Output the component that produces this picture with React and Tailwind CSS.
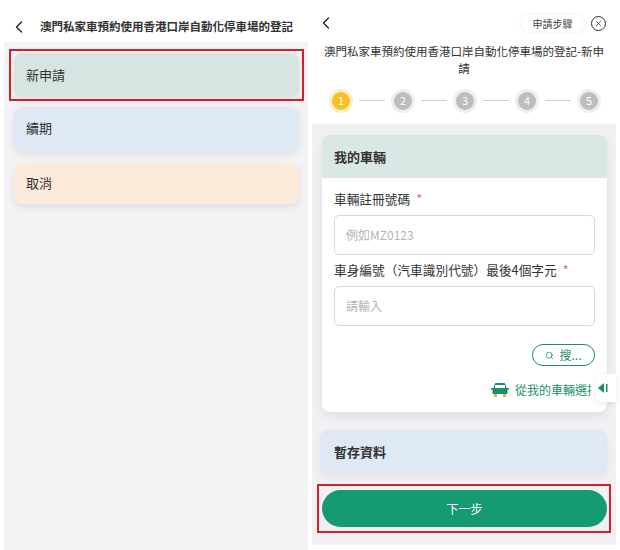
import React from "react";
import { ChevronLeft, X, Search } from "lucide-react";

const font = { fontFamily: '"Noto Sans CJK TC", "Noto Sans", sans-serif' };

const Step = ({ n, active }) => (
  <div
    className={`flex h-[24px] w-[24px] items-center justify-center rounded-full border-[3px] text-[11px] text-white ${
      active ? "border-[#fdf0c8] bg-[#fbbf24]" : "border-[#eeeeee] bg-[#bdbdbd]"
    }`}
  >
    {n}
  </div>
);

const Line = () => <div className="h-px w-[26px] bg-[#cfcfcf]" />;

const Car = () => (
  <svg width="18" height="16" viewBox="0 0 18 16" fill="#1a8f6f">
    <path d="M3.5 2.5C3.8 1.3 4.6 1 5.5 1h7c.9 0 1.7.3 2 1.5L15.5 6H17c.5 0 1 .4 1 .9 0 .4-.4.7-.8.8l-.7.1V12H1.500V7.800l-.7-.1C.4 7.600 0 7.300 0 6.900 0 6.400.5 6 1 6h1.500z" />
    <rect x="4" y="3" width="10" height="3" rx="0.5" fill="#ffffff" />
    <rect x="3" y="12" width="3" height="3" rx="0.5" fill="#d9b44a" />
    <rect x="12" y="12" width="3" height="3" rx="0.5" fill="#d9b44a" />
  </svg>
);

const Field = ({ label, placeholder }) => (
  <div>
    <div className="flex h-[24px] items-center text-[12.7px] text-[#333333]">
      {label}
      <span className="ml-[6px] text-[#e06666]">*</span>
    </div>
    <div className="mt-[4px] flex h-[40px] items-center rounded-[5px] border border-[#d9d9d9] bg-white px-[11px] text-[12px] text-[#b5b5b5]">
      {placeholder}
    </div>
  </div>
);

export default function App() {
  return (
    <div className="flex h-[550px] w-[620px] gap-[4px] overflow-hidden bg-white pl-[4px]" style={font}>
      {/* 左邊：選擇申請類型 */}
      <div className="flex w-[304px] flex-col">
        <div className="flex h-[42px] items-center pt-[11px]">
          <ChevronLeft size={20} strokeWidth={1.6} className="ml-[5px] text-[#222222]" />
          <span className="ml-[11px] whitespace-nowrap text-[11.5px] font-bold text-[#333333]">
            澳門私家車預約使用香港口岸自動化停車場的登記
          </span>
        </div>
        <div className="flex flex-1 flex-col bg-[#f3f3f5] pl-[10px] pr-[9px] pt-[11px]">
          <div className="relative flex h-[44px] items-center rounded-[8px] bg-[#d6e5e1] px-[12px] text-[13px] text-[#333333] shadow-[0_4px_8px_rgba(0,0,0,0.08)]">
            新申請
            <div className="absolute -inset-x-[5px] -inset-y-[4px] border-2 border-[#d0212e]" />
          </div>
          <div className="mt-[10px] flex h-[43px] items-center rounded-[8px] bg-[#dfe8f5] px-[12px] pb-[1px] text-[13px] text-[#333333] shadow-[0_4px_8px_rgba(0,0,0,0.08)]">
            續期
          </div>
          <div className="mt-[13px] flex h-[41px] items-center rounded-[8px] bg-[#fcebdb] px-[12px] pb-[1px] text-[13px] text-[#333333] shadow-[0_4px_8px_rgba(0,0,0,0.08)]">
            取消
          </div>
        </div>
      </div>

      {/* 右邊：新申請表單 */}
      <div className="flex h-[545px] w-[304px] flex-col">
        <div className="flex h-[43px] items-center pt-[3px]">
          <ChevronLeft size={20} strokeWidth={1.6} className="ml-[4px] text-[#222222]" />
          <div className="ml-auto flex h-[17px] w-[63px] items-center justify-center rounded-full bg-white text-[10px] text-[#444444] shadow-[0_0_4px_rgba(0,0,0,0.08)]">
            申請步驟
          </div>
          <div className="ml-[7px] mr-[10px] flex h-[15px] w-[15px] items-center justify-center rounded-full border border-[#333333]">
            <X size={9} strokeWidth={2} className="text-[#333333]" />
          </div>
        </div>
        <div className="px-[8px] text-center text-[11.5px] leading-[17px] text-[#333333]">
          澳門私家車預約使用香港口岸自動化停車場的登記-新申請
        </div>
        <div className="flex h-[47px] items-center gap-[6px] pl-[17px]">
          <Step n={1} active />
          <Line />
          <Step n={2} />
          <Line />
          <Step n={3} />
          <Line />
          <Step n={4} />
          <Line />
          <Step n={5} />
        </div>

        <div className="flex flex-1 flex-col bg-[#f1f1f4] pl-[10px] pr-[9px] pt-[11px]">
          <div className="h-[277px] overflow-hidden rounded-[8px] bg-white shadow-[0_4px_10px_rgba(0,0,0,0.08)]">
            <div className="flex h-[43px] items-center bg-[#d9e8e4] px-[12px] text-[13px] font-bold text-[#333333]">
              我的車輛
            </div>
            <div className="flex flex-col gap-[3px] px-[12px] pt-[9px]">
              <Field label="車輛註冊號碼" placeholder="例如MZ0123" />
              <Field label="車身編號（汽車識別代號）最後4個字元" placeholder="請輸入" />
            </div>
            <div className="mt-[18px] flex justify-end pr-[12px]">
              <div className="flex h-[22px] w-[63px] items-center justify-center gap-[5px] rounded-full border border-[#1a8f6f] text-[12px] text-[#1a8f6f]">
                <Search size={9} strokeWidth={2} className="text-[#1a8f6f]" />
                搜...
              </div>
            </div>
            <div className="mt-[15px] flex h-[18px] items-center pl-[169px]">
              <Car />
              <span className="ml-[6px] w-[76px] overflow-hidden whitespace-nowrap text-[12px] text-[#1a8f6f]">
                從我的車輛選擇
              </span>
            </div>
          </div>
          <div className="-ml-[2px] mt-[18px] flex h-[43px] items-center rounded-[8px] bg-[#dfe8f5] px-[14px] text-[13px] font-bold text-[#333333] shadow-[0_4px_8px_rgba(0,0,0,0.06)]">
            暫存資料
          </div>
          <div className="relative mt-[17px] flex h-[37px] items-center justify-center rounded-full bg-[#169a74] text-[12px] text-white">
            下一步
            <div className="absolute -left-[5px] -right-[4px] -inset-y-[6px] border-2 border-[#d0212e]" />
          </div>
        </div>
      </div>

      {/* 側邊收合標籤 */}
      <div className="absolute left-[596px] top-[374px] flex h-[28px] w-[20px] items-center rounded-l-[6px] bg-white pl-[2px] shadow-[0_2px_6px_rgba(0,0,0,0.08)]">
        <svg width="11" height="10" viewBox="0 0 11 10" fill="#1a8f6f">
          <path d="M6 0v10L0 5z" />
          <rect x="8" y="1" width="1.500" height="8" />
        </svg>
      </div>
    </div>
  );
}
